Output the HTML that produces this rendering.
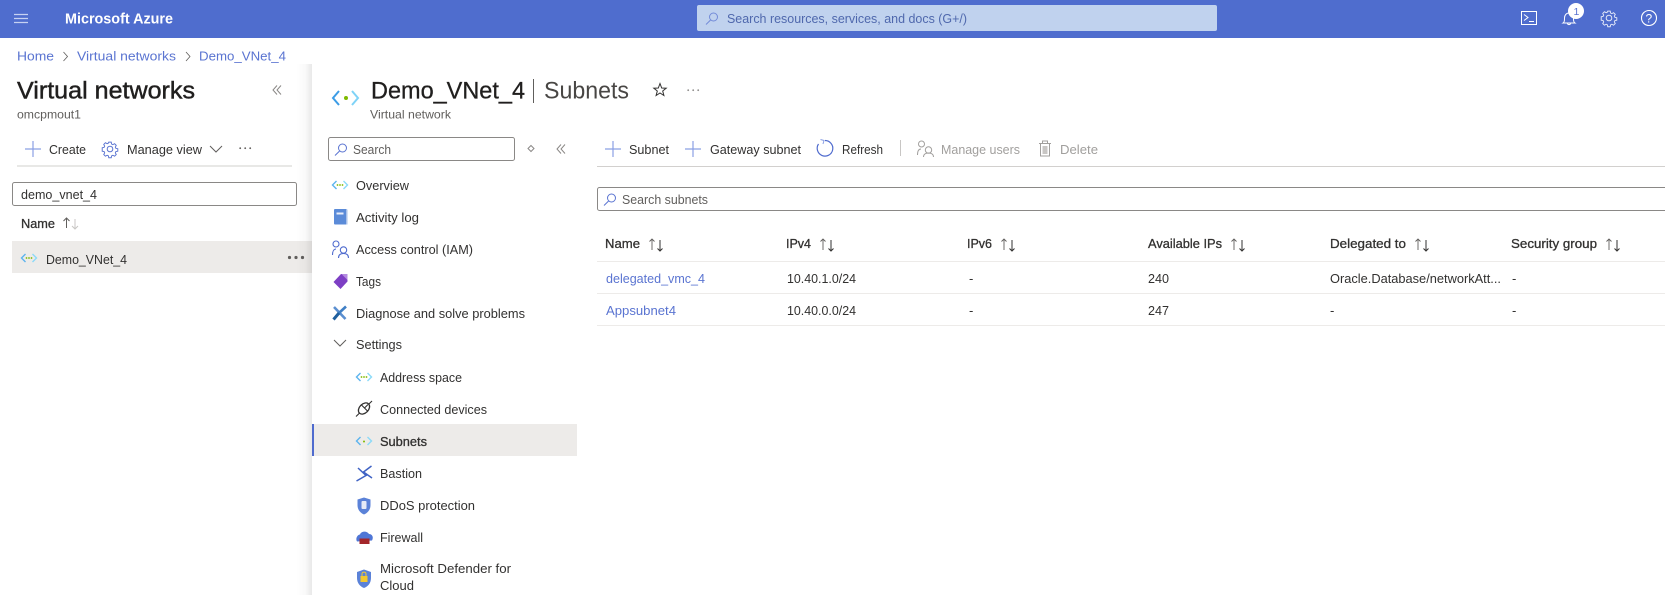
<!DOCTYPE html>
<html lang="en"><head><meta charset="utf-8"><title>Demo_VNet_4 | Subnets</title>
<style>
html,body{margin:0;padding:0;background:#fff;width:1665px;height:595px;overflow:hidden}
svg{display:block}
text{font-family:"Liberation Sans",sans-serif;font-size:13px;fill:#323130}
.l{fill:#5a74d1}.d{fill:#a19f9d}.g{fill:#605e5c}
.s{stroke:#323130;stroke-width:.3px}
</style></head><body>
<svg width="1665" height="595" viewBox="0 0 1665 595" xmlns="http://www.w3.org/2000/svg">
<defs>
<linearGradient id="sh" x1="0" x2="1" y1="0" y2="0"><stop offset="0" stop-color="#000" stop-opacity="0"/><stop offset=".6" stop-color="#000" stop-opacity=".025"/><stop offset="1" stop-color="#000" stop-opacity=".09"/></linearGradient>
<g id="net"><path d="M5.500 2 1.500 6 5.500 10" fill="none" stroke="#5cb4ee" stroke-width="1.400"/><path d="M12.500 2 16.500 6 12.500 10" fill="none" stroke="#8bdaf8" stroke-width="1.400"/><circle cx="6.500" cy="6" r=".9" fill="#7fba00"/><circle cx="9" cy="6" r=".9" fill="#7fba00"/><circle cx="11.500" cy="6" r=".9" fill="#7fba00"/></g>
<g id="net1"><path d="M5.500 2 1.500 6 5.500 10" fill="none" stroke="#5cb4ee" stroke-width="1.400"/><path d="M12.500 2 16.500 6 12.500 10" fill="none" stroke="#8bdaf8" stroke-width="1.400"/><circle cx="9" cy="6.500" r="1" fill="#7fba00"/></g>
<g id="plus"><path d="M8 0V16M0 8H16" stroke="#8ba0e4" stroke-width="1.200" fill="none"/></g>
<g id="mag"><circle cx="8.500" cy="5" r="4" fill="none" stroke="#5a74d1" stroke-width="1"/><path d="M5.600 8 1 12.500" stroke="#5a74d1" stroke-width="1"/></g>
<g id="arr"><path d="M4 12V1M1.500 3.500 4 1 6.500 3.500" fill="none" stroke="#605e5c" stroke-width=".9"/><path d="M12 2V13M9.500 10.500 12 13 14.500 10.500" fill="none" stroke="#323130" stroke-width="1"/></g>
<g id="gear"><circle cx="8" cy="8" r="2.800" fill="none" stroke-width="1"/><path d="M6.700.8h2.600l.4 2 1.300.6 1.800-1 1.800 1.800-1 1.800.6 1.300 2 .4v2.600l-2 .4-.6 1.300 1 1.800-1.800 1.800-1.800-1-1.300.6-.4 2H6.700l-.4-2-1.300-.6-1.800 1-1.800-1.800 1-1.800-.6-1.300-2-.4V6.700l2-.4.6-1.300-1-1.800 1.800-1.800 1.800 1 1.300-.6z" transform="translate(.4 .4) scale(.95)" fill="none" stroke-width="1"/></g>
<g id="dots"><circle cx="1.200" cy="1.200" r=".9"/><circle cx="6.200" cy="1.200" r=".9"/><circle cx="11.200" cy="1.200" r=".9"/></g>
</defs>

<!-- header -->
<rect width="1665" height="38" fill="#4f6dce"/>
<path d="M14 14.500H28M14 18.500H28M14 22.500H28" stroke="#c6d1f2" stroke-width="1.300"/>
<text x="65" y="23.500" textLength="108" lengthAdjust="spacingAndGlyphs" style="font-size:14.500px;font-weight:700;fill:#fff">Microsoft Azure</text>
<rect x="697" y="5" width="520" height="26" rx="2" fill="#c0d2ee"/>
<use href="#mag" x="705" y="12" style="opacity:.75"/>
<text x="727" y="23" textLength="240" lengthAdjust="spacingAndGlyphs" style="fill:#4f68ad">Search resources, services, and docs (G+/)</text>
<rect x="1521.500" y="11.500" width="15" height="13" fill="none" stroke="#fff" stroke-width="1"/>
<path d="M1524 14.500 1528 17.500 1524 20.500M1529 21.500H1534" fill="none" stroke="#fff" stroke-width="1"/>
<path d="M1563 23c1.500-1 1.500-2.500 1.500-5 0-3 2-5 4.500-5s4.500 2 4.500 5c0 2.500 0 4 1.500 5zM1567.500 23.500c.3 1.500 2.700 1.500 3 0" fill="none" stroke="#fff" stroke-width="1"/>
<circle cx="1576" cy="11" r="8" fill="#fff"/>
<text x="1573.500" y="15" style="font-size:10.500px;fill:#5a74d1">1</text>
<use href="#gear" x="1601" y="10" fill="none" stroke="#e3e8f8"/>
<circle cx="1649" cy="18" r="7.500" fill="none" stroke="#fff" stroke-width="1.100"/>
<text x="1645.500" y="22.500" style="font-size:12px;fill:#fff">?</text>

<!-- breadcrumb -->
<text class="l" x="17" y="60.500" textLength="37" lengthAdjust="spacingAndGlyphs">Home</text>
<path d="M63.500 52 67.500 56.500 63.500 61" fill="none" stroke="#605e5c" stroke-width=".8"/>
<text class="l" x="77" y="60.500" textLength="99" lengthAdjust="spacingAndGlyphs">Virtual networks</text>
<path d="M186 52 190 56.500 186 61" fill="none" stroke="#605e5c" stroke-width=".8"/>
<text class="l" x="199" y="60.500" textLength="87" lengthAdjust="spacingAndGlyphs">Demo_VNet_4</text>

<!-- left panel -->
<text x="17" y="98.500" textLength="178" lengthAdjust="spacingAndGlyphs" style="font-size:24px;fill:#201f1e;stroke:#201f1e;stroke-width:.45px">Virtual networks</text>
<text class="g" x="17" y="118.500" textLength="64" lengthAdjust="spacingAndGlyphs" style="font-size:12px">omcpmout1</text>
<path d="M277 85.500 273 90 277 94.500M281 85.500 277 90 281 94.500" fill="none" stroke="#8a8886" stroke-width="1"/>
<use href="#plus" x="25" y="141"/>
<text x="49" y="154" textLength="37" lengthAdjust="spacingAndGlyphs">Create</text>
<use href="#gear" x="102" y="141" fill="none" stroke="#5a74d1"/>
<text x="127" y="154" textLength="75" lengthAdjust="spacingAndGlyphs">Manage view</text>
<path d="M210 146 216 152 222 146" fill="none" stroke="#605e5c" stroke-width="1"/>
<use href="#dots" x="239" y="147" fill="#605e5c"/>
<rect x="17" y="165.500" width="275" height="1" fill="#d2d0ce"/>
<rect x="12.500" y="182.500" width="284" height="23" rx="2" fill="#fff" stroke="#8a8886"/>
<text x="21" y="199" textLength="76" lengthAdjust="spacingAndGlyphs">demo_vnet_4</text>
<text class="s" x="21" y="228" textLength="34" lengthAdjust="spacingAndGlyphs">Name</text>
<path d="M66.500 228V218M63.500 221 66.500 218 69.500 221" fill="none" stroke="#605e5c"/>
<path d="M75 219V229M72 226 75 229 78 226" fill="none" stroke="#c8c6c4"/>
<rect x="12" y="241" width="300" height="32" fill="#edebe9"/>
<use href="#net" x="20" y="252"/>
<text x="46" y="264" textLength="81" lengthAdjust="spacingAndGlyphs">Demo_VNet_4</text>
<circle cx="289.500" cy="257.500" r="1.600" fill="#605e5c"/><circle cx="296" cy="257.500" r="1.600" fill="#605e5c"/><circle cx="302.500" cy="257.500" r="1.600" fill="#605e5c"/>

<!-- shadow + main -->
<rect x="296" y="64" width="16" height="531" fill="url(#sh)"/>
<rect x="312" y="64" width="1353" height="531" fill="#fff"/>
<path d="M339 91 333 98 339 105" fill="none" stroke="#3c9ce6" stroke-width="2"/>
<path d="M352 91 358 98 352 105" fill="none" stroke="#7fd3f7" stroke-width="2"/>
<circle cx="346" cy="98" r="2" fill="#7fba00"/>
<text x="371" y="98.500" textLength="154" lengthAdjust="spacingAndGlyphs" style="font-size:24px;fill:#201f1e;stroke:#201f1e;stroke-width:.3px">Demo_VNet_4</text>
<rect x="533" y="79" width="1" height="24" fill="#605e5c"/>
<text x="544" y="98.500" textLength="85" lengthAdjust="spacingAndGlyphs" style="font-size:24px;fill:#484644">Subnets</text>
<path d="M660 83.500 661.700 88 666.200 88.200 662.700 91 663.900 95.500 660 93 656.100 95.500 657.300 91 653.800 88.200 658.300 88Z" fill="none" stroke="#323130" stroke-width="1"/>
<use href="#dots" x="687" y="89" fill="#605e5c" style="opacity:.7"/>
<text class="g" x="370" y="118.500" textLength="81" lengthAdjust="spacingAndGlyphs" style="font-size:12px">Virtual network</text>

<!-- resource menu -->
<rect x="328.500" y="137.500" width="186" height="23" rx="2" fill="#fff" stroke="#8a8886"/>
<use href="#mag" x="334" y="143"/>
<text class="g" x="353" y="154" textLength="38" lengthAdjust="spacingAndGlyphs">Search</text>
<path d="M531 145.500 534 148.500 531 151.500 528 148.500Z" fill="none" stroke="#8a8886"/>
<path d="M561 144.500 557 149 561 153.500M565 144.500 561 149 565 153.500" fill="none" stroke="#8a8886"/>

<use href="#net" x="331" y="179"/>
<text x="356" y="190" textLength="53" lengthAdjust="spacingAndGlyphs">Overview</text>
<rect x="334" y="209" width="13" height="15.500" rx="1" fill="#5b8bd8"/><rect x="346" y="209.500" width="1.500" height="15" fill="#a9c1e8"/><rect x="336.500" y="212.500" width="7" height="2" fill="#e8eefa"/>
<text x="356" y="222" textLength="63" lengthAdjust="spacingAndGlyphs">Activity log</text>
<circle cx="336" cy="244" r="3" fill="none" stroke="#4f6bce" stroke-width="1.100"/><path d="M332.500 255c0-4 1.500-6 3.500-6" fill="none" stroke="#4f6bce" stroke-width="1.100"/>
<circle cx="343.500" cy="250" r="3.200" fill="none" stroke="#4f6bce" stroke-width="1.100"/><path d="M338.500 258c0-3 2-4.500 5-4.500s5 1.500 5 4.500" fill="none" stroke="#4f6bce" stroke-width="1.100"/>
<text x="356" y="254" textLength="117" lengthAdjust="spacingAndGlyphs">Access control (IAM)</text>
<path d="M341 274H346.500Q347.500 274 347.500 275V281.500L340.500 289 333.500 282Z" fill="#7d3fc4"/><path d="M341.500 274H347.500V280Z" fill="#b48be0"/>
<text x="356" y="286" textLength="25" lengthAdjust="spacingAndGlyphs">Tags</text>
<path d="M334 307 345.500 319" stroke="#5b8fd0" stroke-width="2.600" fill="none"/><path d="M346 306.500 339 313" stroke="#3f7fc5" stroke-width="2.600" fill="none"/><path d="M339 313 333.500 319.500" stroke="#1f5f9e" stroke-width="3" fill="none"/>
<text x="356" y="318" textLength="169" lengthAdjust="spacingAndGlyphs">Diagnose and solve problems</text>
<path d="M334 340 340 346 346 340" fill="none" stroke="#605e5c" stroke-width="1"/>
<text x="356" y="349" textLength="46" lengthAdjust="spacingAndGlyphs">Settings</text>
<use href="#net" x="355" y="371"/>
<text x="380" y="382" textLength="82" lengthAdjust="spacingAndGlyphs">Address space</text>
<path d="M356 416.500 372 401" stroke="#323130" stroke-width="1.100" fill="none"/>
<ellipse cx="364" cy="408.500" rx="6.500" ry="4.500" transform="rotate(-45 364 408.500)" fill="#fff" stroke="#323130" stroke-width="1.300"/>
<path d="M361 404.500 368 411.500M364.500 408 368 404.500" stroke="#323130" stroke-width="1.100" fill="none"/>
<text x="380" y="414" textLength="107" lengthAdjust="spacingAndGlyphs">Connected devices</text>
<rect x="312" y="424" width="265" height="32" fill="#edebe9"/>
<rect x="312" y="424" width="2" height="32" fill="#4f6bce"/>
<use href="#net1" x="355" y="435"/>
<text class="s" x="380" y="446" textLength="47" lengthAdjust="spacingAndGlyphs">Subnets</text>
<path d="M371.500 466 363.500 472 372 478M356.500 481 366 475.500 358 468" fill="none" stroke="#3f62c4" stroke-width="1.500"/>
<text x="380" y="478" textLength="42" lengthAdjust="spacingAndGlyphs">Bastion</text>
<path d="M364 497.500 370.500 499.500V505C370.500 510 367.500 513 364 514.500 360.500 513 357.500 510 357.500 505V499.500Z" fill="#5b82d8"/><rect x="361.500" y="501" width="5" height="8" rx="1" fill="#e6ebf7"/>
<text x="380" y="510" textLength="95" lengthAdjust="spacingAndGlyphs">DDoS protection</text>
<path d="M357 541.500C355 538 358 534.500 360 534.500 361 531 367 530.500 369 534 372 534 374 537 372 540.500Z" fill="#4f76d6"/><rect x="359.500" y="538.500" width="10" height="5.500" fill="#a3262a"/>
<text x="380" y="542" textLength="43" lengthAdjust="spacingAndGlyphs">Firewall</text>
<path d="M364 569.500 371 572V578C371 583 368 586.500 364 588 360 586.500 357 583 357 578V572Z" fill="#5b82d8"/><rect x="360.500" y="576" width="7" height="6" fill="#f4c92f"/><path d="M362 576V574C362 571.500 366 571.500 366 574V576" fill="none" stroke="#f4c92f" stroke-width="1"/>
<text x="380" y="573" textLength="131" lengthAdjust="spacingAndGlyphs">Microsoft Defender for</text>
<text x="380" y="590" textLength="34" lengthAdjust="spacingAndGlyphs">Cloud</text>

<!-- command bar -->
<use href="#plus" x="605" y="141"/>
<text x="629" y="154" textLength="40" lengthAdjust="spacingAndGlyphs">Subnet</text>
<use href="#plus" x="685" y="141"/>
<text x="710" y="154" textLength="91" lengthAdjust="spacingAndGlyphs">Gateway subnet</text>
<path d="M825 140.500A7.800 7.800 0 1 1 818.500 144" fill="none" stroke="#4f6bce" stroke-width="1.200"/>
<path d="M820.500 139.500 824 140.500 823 144" fill="none" stroke="#8ba0e4" stroke-width="1"/>
<text x="842" y="154" textLength="41" lengthAdjust="spacingAndGlyphs">Refresh</text>
<rect x="900" y="140" width="1" height="16" fill="#c8c6c4"/>
<circle cx="921.500" cy="144" r="3" fill="none" stroke="#a19f9d"/><path d="M917.500 155c0-4 1.500-6 3.500-6" fill="none" stroke="#a19f9d"/><circle cx="928.500" cy="150" r="3.200" fill="none" stroke="#a19f9d"/><path d="M923.500 157c0-2.500 2-4 5-4s5 1.500 5 4" fill="none" stroke="#a19f9d"/>
<text class="d" x="941" y="154" textLength="79" lengthAdjust="spacingAndGlyphs">Manage users</text>
<path d="M1039 143.500H1051M1042.500 143V141H1047.500V143" fill="none" stroke="#a19f9d"/><rect x="1040.500" y="143.500" width="9" height="12.500" fill="none" stroke="#a19f9d"/><rect x="1042.500" y="146" width="5" height="8" fill="#c8c6c4"/>
<text class="d" x="1060" y="154" textLength="38" lengthAdjust="spacingAndGlyphs">Delete</text>
<rect x="597" y="166" width="1068" height="1" fill="#d2d0ce"/>

<!-- search subnets -->
<rect x="597.500" y="187.500" width="1080" height="23" rx="2" fill="#fff" stroke="#8a8886"/>
<use href="#mag" x="603" y="193"/>
<text class="g" x="622" y="204" textLength="86" lengthAdjust="spacingAndGlyphs">Search subnets</text>

<!-- table -->
<text class="s" x="605" y="248" textLength="35" lengthAdjust="spacingAndGlyphs">Name</text>
<text class="s" x="786" y="248" textLength="25" lengthAdjust="spacingAndGlyphs">IPv4</text>
<text class="s" x="967" y="248" textLength="25" lengthAdjust="spacingAndGlyphs">IPv6</text>
<text class="s" x="1148" y="248" textLength="74" lengthAdjust="spacingAndGlyphs">Available IPs</text>
<text class="s" x="1330" y="248" textLength="76" lengthAdjust="spacingAndGlyphs">Delegated to</text>
<text class="s" x="1511" y="248" textLength="86" lengthAdjust="spacingAndGlyphs">Security group</text>
<use href="#arr" x="648" y="238"/><use href="#arr" x="819" y="238"/><use href="#arr" x="1000" y="238"/><use href="#arr" x="1230" y="238"/><use href="#arr" x="1414" y="238"/><use href="#arr" x="1605" y="238"/>
<rect x="597" y="261" width="1068" height="1" fill="#edebe9"/>
<text class="l" x="606" y="283" textLength="99" lengthAdjust="spacingAndGlyphs">delegated_vmc_4</text>
<text x="787" y="283" textLength="69" lengthAdjust="spacingAndGlyphs">10.40.1.0/24</text>
<text x="969" y="283">-</text>
<text x="1148" y="283" textLength="21" lengthAdjust="spacingAndGlyphs">240</text>
<text x="1330" y="283" textLength="171" lengthAdjust="spacingAndGlyphs">Oracle.Database/networkAtt...</text>
<text x="1512" y="283">-</text>
<rect x="597" y="293" width="1068" height="1" fill="#edebe9"/>
<text class="l" x="606" y="315" textLength="70" lengthAdjust="spacingAndGlyphs">Appsubnet4</text>
<text x="787" y="315" textLength="69" lengthAdjust="spacingAndGlyphs">10.40.0.0/24</text>
<text x="969" y="315">-</text>
<text x="1148" y="315" textLength="21" lengthAdjust="spacingAndGlyphs">247</text>
<text x="1330" y="315">-</text>
<text x="1512" y="315">-</text>
<rect x="597" y="325" width="1068" height="1" fill="#edebe9"/>
</svg>
</body></html>
